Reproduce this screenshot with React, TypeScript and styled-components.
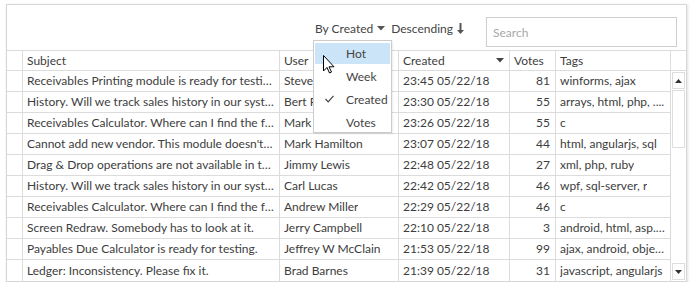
import React from 'react';
import styled, { createGlobalStyle } from 'styled-components';

const GlobalStyle = createGlobalStyle`
  body {
    margin: 0;
    background: #ffffff;
    font-family: 'Segoe UI', Lato, 'Liberation Sans', sans-serif;
    font-size: 12px;
    color: #3d3d3d;
  }
`;

const LINE = '#dcdcdc';

const Panel = styled.div`
  position: relative;
  margin: 4px 0 0 6px;
  width: 681px;
  box-sizing: border-box;
  border: 1px solid #d6d6d6;
  background: #fff;
  box-shadow: 1px 1px 3px rgba(0, 0, 0, 0.12);
`;

const Toolbar = styled.div`
  height: 45px;
  display: flex;
  align-items: flex-start;
  justify-content: flex-end;
  padding: 12px 9px 0 0;
  box-sizing: border-box;
`;

const SortGroup = styled.div`
  display: flex;
  align-items: center;
  gap: 6px;
  margin-top: 4px;
  margin-right: 22px;
  color: #444;
`;

const SortLink = styled.span`
  display: inline-flex;
  align-items: center;
  gap: 4px;
  white-space: nowrap;
`;

const SearchBox = styled.input`
  width: 191px;
  height: 30px;
  box-sizing: border-box;
  border: 1px solid #cfcfcf;
  padding: 4px 6px;
  font: inherit;
  outline: none;
  &::placeholder {
    color: #a8a8a8;
  }
`;

const Row = styled.div<{ $header?: boolean; $last?: boolean }>`
  display: flex;
  height: 21px;
  box-sizing: border-box;
  border-top: ${(p) => (p.$header ? `1px solid ${LINE}` : 'none')};
  border-bottom: ${(p) => (p.$last ? 'none' : `1px solid ${LINE}`)};
`;

const Cell = styled.div<{ $w: number; $right?: boolean }>`
  width: ${(p) => p.$w}px;
  flex: none;
  box-sizing: border-box;
  border-right: 1px solid ${LINE};
  padding: 0 5px 0 4px;
  display: flex;
  align-items: center;
  justify-content: ${(p) => (p.$right ? 'flex-end' : 'space-between')};
  white-space: nowrap;
  overflow: hidden;
  line-height: 20px;
`;

const CellText = styled.span`
  overflow: hidden;
  text-overflow: ellipsis;
  white-space: nowrap;
`;

const Body = styled.div`
  display: flex;
`;

const Rows = styled.div`
  display: flex;
  flex-direction: column;
`;

const ScrollBar = styled.div`
  width: 15px;
  display: flex;
  flex-direction: column;
  padding-left: 1px;
  box-sizing: border-box;
`;

const ScrollButton = styled.div`
  height: 17px;
  width: 13px;
  margin: 1px 0;
  box-sizing: border-box;
  border: 1px solid #dedede;
  display: flex;
  align-items: center;
  justify-content: center;
`;

const Thumb = styled.div`
  height: 58px;
  width: 13px;
  box-sizing: border-box;
  border: 1px solid #dedede;
`;

const Spacer = styled.div`
  flex: 1;
`;

const Menu = styled.div`
  position: absolute;
  left: 306px;
  top: 35px;
  width: 79px;
  height: 93px;
  box-sizing: border-box;
  border: 1px solid #cccccc;
  background: #fff;
  padding: 2px 1px;
  box-shadow: 1px 1px 2px rgba(0, 0, 0, 0.08);
`;

const MenuItem = styled.div<{ $active?: boolean }>`
  position: relative;
  height: 21px;
  margin-bottom: 2px;
  padding-left: 31px;
  display: flex;
  align-items: center;
  color: #444;
  background: ${(p) => (p.$active ? '#cce4f7' : 'transparent')};
`;

const Check = styled.svg`
  position: absolute;
  left: 10px;
  top: 6px;
`;

const Cursor = styled.svg`
  position: absolute;
  left: 316px;
  top: 50px;
  pointer-events: none;
`;

const Tri = ({ color = '#555' }: { color?: string }) => (
  <svg width="8" height="5" viewBox="0 0 8 5">
    <path d="M0 0 H8 L4 4.5 Z" fill={color} />
  </svg>
);

const cols = [16, 257, 119, 111, 46, 115];

const data: [string, string, string, number, string][] = [
  ['Receivables Printing module is ready for testing.', 'Steven Baker', '23:45 05/22/18', 81, 'winforms, ajax'],
  ['History. Will we track sales history in our system?', 'Bert Parkins', '23:30 05/22/18', 55, 'arrays, html, php, ....'],
  ['Receivables Calculator. Where can I find the formula?', 'Mark Hamilton', '23:26 05/22/18', 55, 'c'],
  ["Cannot add new vendor. This module doesn't work!", 'Mark Hamilton', '23:07 05/22/18', 44, 'html, angularjs, sql'],
  ['Drag & Drop operations are not available in the scheduler.', 'Jimmy Lewis', '22:48 05/22/18', 27, 'xml, php, ruby'],
  ['History. Will we track sales history in our system?', 'Carl Lucas', '22:42 05/22/18', 46, 'wpf, sql-server, r'],
  ['Receivables Calculator. Where can I find the formula?', 'Andrew Miller', '22:29 05/22/18', 46, 'c'],
  ['Screen Redraw. Somebody has to look at it.', 'Jerry Campbell', '22:10 05/22/18', 3, 'android, html, asp.net'],
  ['Payables Due Calculator is ready for testing.', 'Jeffrey W McClain', '21:53 05/22/18', 99, 'ajax, android, objective-c'],
  ['Ledger: Inconsistency. Please fix it.', 'Brad Barnes', '21:39 05/22/18', 31, 'javascript, angularjs'],
];

export default function App() {
  return (
    <>
      <GlobalStyle />
      <Panel>
        <Toolbar>
          <SortGroup>
            <SortLink>
              By Created <Tri />
            </SortLink>
            <SortLink>
              Descending
              <svg width="7" height="11" viewBox="0 0 7 11">
                <path d="M2.5 0 H4.5 V7 H7 L3.5 11 L0 7 H2.5 Z" fill="#555" />
              </svg>
            </SortLink>
          </SortGroup>
          <SearchBox placeholder="Search" />
        </Toolbar>

        <Row $header>
          <Cell $w={cols[0]} />
          <Cell $w={cols[1]}>Subject</Cell>
          <Cell $w={cols[2]}>User</Cell>
          <Cell $w={cols[3]}>
            <CellText>Created</CellText>
            <Tri color="#444" />
          </Cell>
          <Cell $w={cols[4]}>Votes</Cell>
          <Cell $w={cols[5]}>Tags</Cell>
          <Spacer />
        </Row>

        <Body>
          <Rows>
            {data.map((r, i) => (
              <Row key={i} $last={i === data.length - 1}>
                <Cell $w={cols[0]} />
                <Cell $w={cols[1]}>
                  <CellText>{r[0]}</CellText>
                </Cell>
                <Cell $w={cols[2]}>
                  <CellText>{r[1]}</CellText>
                </Cell>
                <Cell $w={cols[3]}>
                  <CellText>{r[2]}</CellText>
                </Cell>
                <Cell $w={cols[4]} $right>
                  {r[3]}
                </Cell>
                <Cell $w={cols[5]}>
                  <CellText>{r[4]}</CellText>
                </Cell>
              </Row>
            ))}
          </Rows>
          <ScrollBar>
            <ScrollButton>
              <svg width="7" height="4" viewBox="0 0 7 4">
                <path d="M0 4 H7 L3.5 0 Z" fill="#333" />
              </svg>
            </ScrollButton>
            <Thumb />
            <Spacer />
            <ScrollButton>
              <svg width="7" height="4" viewBox="0 0 7 4">
                <path d="M0 0 H7 L3.5 4 Z" fill="#333" />
              </svg>
            </ScrollButton>
          </ScrollBar>
        </Body>

        <Menu>
          <MenuItem $active>Hot</MenuItem>
          <MenuItem>Week</MenuItem>
          <MenuItem>
            <Check width="9" height="8" viewBox="0 0 9 8">
              <path d="M0.5 4 L3.2 6.8 L8.5 0.8" stroke="#444" strokeWidth="1.2" fill="none" />
            </Check>
            Created
          </MenuItem>
          <MenuItem>Votes</MenuItem>
        </Menu>

        <Cursor width="12" height="19" viewBox="0 0 12 19">
          <path
            d="M0.5 0.5 V16 L4 12.5 L6.5 18 L8.5 17 L6 11.8 H11 Z"
            fill="#fff"
            stroke="#000"
            strokeWidth="1"
            strokeLinejoin="round"
          />
        </Cursor>
      </Panel>
    </>
  );
}
